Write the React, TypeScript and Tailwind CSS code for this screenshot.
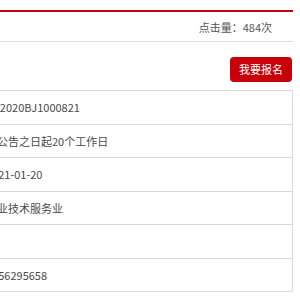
const rows = [
  "ZB2020BJ1000821",
  "自公告之日起20个工作日",
  "2021-01-20",
  "专业技术服务业",
  "",
  "8756295658",
];

export default function App() {
  return (
    <div
      className="w-[300px] h-[300px] bg-white overflow-hidden"
      style={{ fontFamily: '"Noto Sans CJK SC", "Noto Sans", sans-serif' }}
    >
      <div className="w-[293px] pt-[10px]">
        <div className="h-[2px] bg-[#c8000a]" />

        {/* visit counter */}
        <div className="h-[29px] flex items-center justify-end pr-[21px] pt-[2px] text-[11px] text-[#555]">
          点击量：484次
        </div>
        <div className="h-px bg-[#dedede]" />

        {/* signup */}
        <div className="flex justify-end pt-[15px] pb-[8px] pr-px">
          <button className="w-[62px] h-[25px] rounded-[4px] bg-[#c8000a] text-white text-[11px] leading-none">
            我要报名
          </button>
        </div>

        {/* detail table */}
        <div className="border-t border-r border-[#dadada]">
          {rows.map((value, i) => (
            <div
              key={i}
              className="h-[33.5px] border-b border-[#dadada] flex items-center overflow-hidden"
            >
              <span className="-ml-[14px] whitespace-nowrap text-[11px] text-[#4a4a4a]">{value}</span>
            </div>
          ))}
        </div>
      </div>
    </div>
  );
}
